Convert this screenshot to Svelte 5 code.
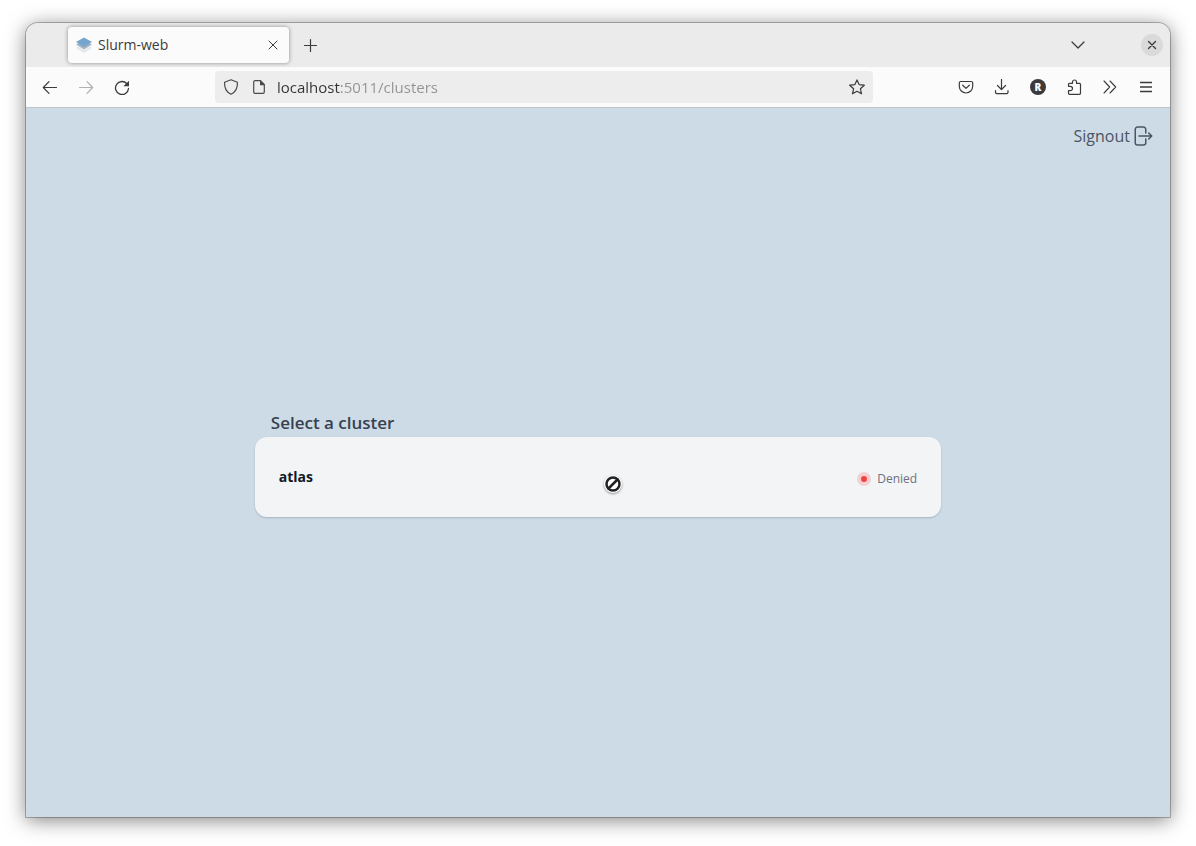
<script lang="ts">
    let address = $state("localhost:5011/clusters");

    const clusters = [{ name: "atlas", status: "Denied" }];
</script>

<div class="desktop">
    <div class="window">
        <header class="tab-strip">
            <div class="tab">
                <svg class="favicon" viewBox="0 0 16 16" aria-hidden="true">
                    <path d="m0 11 8-4 8 4-8 5z" fill="#e6e7e9" />
                    <path d="m0 8 8-4 8 4-8 5.2z" fill="#fbfbfb" />
                    <path d="m0 7.5 8-4 8 4-8 5z" fill="#a3b3c2" />
                    <path d="M0 4.9 8 .6l8 4.3-8 5z" fill="#74a5cd" />
                </svg>
                <span class="tab-title">Slurm-web</span>
                <button class="tab-close" aria-label="Close tab">
                    <svg viewBox="0 0 16 16"><path d="m4 4 8 8m0-8-8 8" stroke-width="1" /></svg>
                </button>
            </div>
            <button class="new-tab" aria-label="New tab">
                <svg viewBox="0 0 16 16"><path d="M7.5 2.5v12M1.5 8.5h12" /></svg>
            </button>
            <button class="tab-list" aria-label="List all tabs">
                <svg viewBox="0 0 16 16"><path d="m2 5 6 6 6-6" stroke-width="1.3" /></svg>
            </button>
            <button class="window-close" aria-label="Close window">
                <svg viewBox="0 0 16 16"><path d="m4.5 4.5 7 7m0-7-7 7" stroke-width="1.4" /></svg>
            </button>
        </header>

        <nav class="toolbar" aria-label="Browser toolbar">
            <button class="tool" aria-label="Back">
                <svg viewBox="0 0 16 16"><path d="M14.5 8.5h-13M7 2.7 1.3 8.5 7 14.3" /></svg>
            </button>
            <button class="tool" aria-label="Forward" disabled>
                <svg viewBox="0 0 16 16"><path d="M1.5 8.5h13M9 2.7l5.7 5.8L9 14.3" /></svg>
            </button>
            <button class="tool" aria-label="Reload">
                <svg viewBox="0 0 16 16">
                    <path d="M14.5 9.5A6.5 6.5 0 1 1 12.9 4.7" stroke-width="1.3" />
                    <path d="M15 1.7v5.6H9.4z" fill="currentColor" stroke="none" />
                </svg>
            </button>

            <div class="address-bar">
                <svg class="shield" viewBox="0 0 16 16" aria-hidden="true">
                    <path d="M8 .8 14.4 3.2c.4 5.2-1.4 9.6-6.4 12C3 12.8 1.2 8.4 1.6 3.2z" />
                </svg>
                <svg class="page" viewBox="0 0 16 16" aria-hidden="true">
                    <path d="M9.5 1.7H4A1.3 1.3 0 0 0 2.7 3v10A1.3 1.3 0 0 0 4 14.3h8a1.3 1.3 0 0 0 1.3-1.3V5.5z" />
                    <path d="M9 1.2v5h5z" fill="currentColor" stroke="none" />
                </svg>
                <input class="address" type="text" aria-label="Address" spellcheck="false" bind:value={address} />
                <button class="bookmark" aria-label="Bookmark this page">
                    <svg viewBox="0 0 16 16">
                        <path d="m8 .9 2.1 4.7 5.2.6-3.9 3.5 1.1 5.1L8 12.3l-4.5 2.5 1.1-5.1L.7 6.2l5.2-.6z" />
                    </svg>
                </button>
            </div>

            <button class="tool" aria-label="Save to Pocket">
                <svg viewBox="0 0 16 16">
                    <path d="M2.8 2.5h10.4A1.5 1.5 0 0 1 14.7 4v3.3a6.7 6.7 0 0 1-13.4 0V4a1.5 1.5 0 0 1 1.5-1.5z" />
                    <path d="M4.7 6.2 8 9.4l3.3-3.2" />
                </svg>
            </button>
            <button class="tool" aria-label="Downloads">
                <svg viewBox="0 0 16 16">
                    <path d="M7.500.5v10M3.500 6.500l4 4.200 4-4.200M1.500 11.500v1.700A1.500 1.500 0 0 0 3 14.700h9.500a1.500 1.500 0 0 0 1.500-1.500v-1.700" />
                </svg>
            </button>
            <button class="tool" aria-label="Account">
                <span class="avatar">R</span>
            </button>
            <button class="tool" aria-label="Extensions">
                <svg viewBox="0 0 16 16">
                    <path d="M2.5 7.3v-2a1 1 0 0 1 1-1h3V3a2 2 0 0 1 4 0v1.3h3a1 1 0 0 1 1 1v9a1 1 0 0 1-1 1h-10a1 1 0 0 1-1-1v-2.6h1.800a2.200 2.200 0 0 0 0-4.400z" />
                </svg>
            </button>
            <button class="tool" aria-label="More tools">
                <svg viewBox="0 0 16 16"><path d="m2 2 5.7 6L2 14M8 2l5.7 6L8 14" stroke-width="1.1" /></svg>
            </button>
            <button class="tool" aria-label="Open application menu">
                <svg viewBox="0 0 16 16"><path d="M2 3.500h12M2 8h12M2 12.500h12" stroke-linecap="butt" stroke-width="1.3" /></svg>
            </button>
        </nav>

        <main>
            <a class="signout" href="#signout">
                Signout
                <svg viewBox="0 0 24 24" aria-hidden="true">
                    <path
                        d="M15.75 9V5.25A2.25 2.25 0 0 0 13.5 3h-6a2.25 2.25 0 0 0-2.25 2.25v13.5A2.25 2.25 0 0 0 7.5 21h6a2.25 2.25 0 0 0 2.25-2.25V15m3 0 3-3m0 0-3-3m3 3H9"
                    />
                </svg>
            </a>

            <section class="clusters">
                <h1>Select a cluster</h1>
                <ul>
                    {#each clusters as cluster}
                        <li class="cluster">
                            <span class="cluster-name">{cluster.name}</span>
                            <span class="cluster-status">
                                <span class="dot"></span>
                                {cluster.status}
                            </span>
                            <svg class="blocked" viewBox="0 0 20 20" aria-hidden="true">
                                <circle cx="10" cy="10" r="9" fill="#fff" stroke="none" />
                                <circle cx="10" cy="10" r="6.5" />
                                <path d="m5.5 14.5 9-9" />
                            </svg>
                        </li>
                    {/each}
                </ul>
            </section>
        </main>
    </div>
</div>

<style>
    :global(body) {
        margin: 0;
        background: #fff;
    }

    .desktop {
        display: flex;
        box-sizing: border-box;
        min-height: 100vh;
        padding: 23px 26px 29px;
        font-family: "Open Sans", "Noto Sans", sans-serif;
    }

    .window {
        flex: 1;
        display: flex;
        flex-direction: column;
        min-width: 0;
        border-radius: 12px 12px 0 0;
        background: #cddbe6;
        box-shadow:
            0 0 0 1px rgba(0, 0, 0, 0.25),
            0 3px 20px rgba(0, 0, 0, 0.5);
    }

    svg {
        display: block;
        flex: none;
        width: 16px;
        height: 16px;
        fill: none;
        stroke: currentColor;
        stroke-width: 1.2;
        stroke-linecap: round;
        stroke-linejoin: round;
    }

    button {
        display: flex;
        align-items: center;
        justify-content: center;
        flex: none;
        padding: 0;
        border: 0;
        background: none;
        color: #3b3b3b;
        font: inherit;
    }

    .tab-strip {
        display: flex;
        align-items: center;
        height: 44px;
        padding: 0 7px 0 42px;
        border-radius: 12px 12px 0 0;
        background: #ebebeb;
    }

    .tab {
        display: flex;
        align-items: center;
        box-sizing: border-box;
        width: 221px;
        height: 36px;
        padding: 0 8px;
        border-radius: 4px;
        background: #fbfbfb;
        box-shadow: 0 0 4px rgba(0, 0, 0, 0.4);
    }

    .favicon {
        stroke: none;
    }

    .tab-title {
        flex: 1;
        margin-left: 6px;
        color: #3b3b3b;
        font-size: 14px;
        line-height: 20px;
    }

    .tab-close {
        width: 16px;
        height: 24px;
    }

    .new-tab {
        width: 32px;
        height: 32px;
        margin-left: 6px;
    }

    .tab-list {
        width: 32px;
        height: 32px;
        margin: 0 47px 0 auto;
    }

    .window-close {
        width: 22px;
        height: 22px;
        border-radius: 50%;
        background: #dadada;
    }

    .toolbar {
        display: flex;
        align-items: center;
        height: 40px;
        padding: 0 6px;
        border-bottom: 1px solid #c0c6ca;
        background: #fbfbfb;
    }

    .tool {
        width: 36px;
        height: 32px;
    }

    .tool:disabled {
        color: #b0b0b0;
    }

    .address-bar {
        flex: 1;
        display: flex;
        align-items: center;
        min-width: 0;
        height: 32px;
        margin: 0 75px;
        padding: 0 8px;
        box-sizing: border-box;
        border-radius: 4px;
        background: #ededed;
        color: #4a4a4a;
    }

    .shield {
        margin-right: 12px;
    }

    .page {
        margin-right: 10px;
    }

    /* the host is painted darker than the port and path */
    .address {
        flex: 1;
        min-width: 0;
        padding: 0;
        border: 0;
        outline: 0;
        background: linear-gradient(to right, #333 63px, #929292 63px);
        background-clip: text;
        color: transparent;
        caret-color: #333;
        font-family: inherit;
        font-size: 15px;
        line-height: 20px;
    }

    .avatar {
        width: 16px;
        height: 16px;
        border-radius: 50%;
        background: #3b3b3b;
        color: #fff;
        font-size: 10px;
        font-weight: 800;
        line-height: 16px;
        text-align: center;
    }

    main {
        flex: 1;
        display: grid;
        grid-template-rows: 1fr auto 1fr;
    }

    .signout {
        display: flex;
        align-items: center;
        align-self: start;
        justify-self: end;
        margin: 16px 16px 0 0;
        color: #4b5563;
        font-size: 16px;
        line-height: 24px;
        text-decoration: none;
    }

    .signout svg {
        width: 24px;
        height: 24px;
        stroke-width: 1.5;
    }

    .clusters {
        width: 60%;
        margin: 0 auto;
    }

    h1 {
        margin: 0;
        padding-left: 16px;
        color: #374151;
        font-size: 17px;
        font-weight: 600;
        line-height: 28px;
    }

    ul {
        margin: 0;
        padding: 0;
        list-style: none;
    }

    .cluster {
        position: relative;
        display: flex;
        align-items: center;
        justify-content: space-between;
        height: 80px;
        padding: 0 24px;
        border-radius: 12px;
        background: #f3f4f6;
        box-shadow: 0 1px 2px rgba(17, 24, 39, 0.2);
        cursor: not-allowed;
    }

    .cluster-name {
        color: #111827;
        font-size: 14px;
        font-weight: 700;
        line-height: 24px;
    }

    .cluster-status {
        display: flex;
        align-items: center;
        gap: 6px;
        padding-top: 4px;
        color: #6b7280;
        font-size: 12px;
        line-height: 20px;
    }

    .dot {
        width: 6px;
        height: 6px;
        border: 4px solid #f5cfd1;
        border-radius: 50%;
        background: #ef4444;
    }

    .blocked {
        position: absolute;
        top: 37px;
        left: calc(50% + 5px);
        width: 20px;
        height: 20px;
        color: #222;
        stroke-width: 2.5;
        filter: drop-shadow(0 1px 1px rgba(0, 0, 0, 0.4));
    }
</style>
